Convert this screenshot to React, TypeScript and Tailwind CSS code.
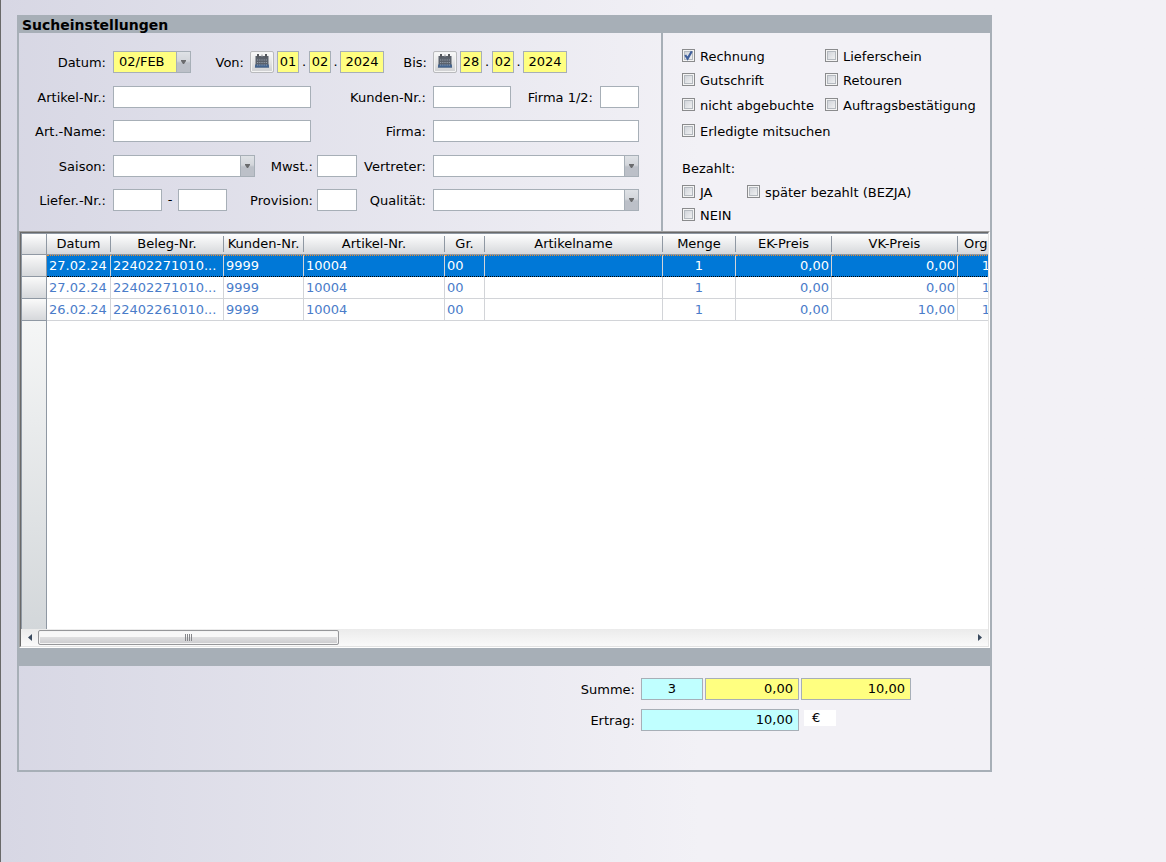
import { useState } from 'react';
import type { ReactNode } from 'react';
import clsx from 'clsx';

type Column = {
    title: string;
    width: string;
    align: string;
};

const columns: Column[] = [
    { title: 'Datum', width: 'w-[64px]', align: 'text-left' },
    { title: 'Beleg-Nr.', width: 'w-[113px]', align: 'text-left' },
    { title: 'Kunden-Nr.', width: 'w-[80px]', align: 'text-left' },
    { title: 'Artikel-Nr.', width: 'w-[141px]', align: 'text-left' },
    { title: 'Gr.', width: 'w-[40px]', align: 'text-left' },
    { title: 'Artikelname', width: 'w-[178px]', align: 'text-left' },
    { title: 'Menge', width: 'w-[73px]', align: 'text-center' },
    { title: 'EK-Preis', width: 'w-[96px]', align: 'text-right' },
    { title: 'VK-Preis', width: 'w-[126px]', align: 'text-right' },
    { title: 'Org', width: 'w-[57px]', align: 'text-center' },
];

const rows = [
    ['27.02.24', '22402271010...', '9999', '10004', '00', '', '1', '0,00', '0,00', '1'],
    ['27.02.24', '22402271010...', '9999', '10004', '00', '', '1', '0,00', '0,00', '1'],
    ['26.02.24', '22402261010...', '9999', '10004', '00', '', '1', '0,00', '10,00', '1'],
];

function Label({ htmlFor, className, children }: { htmlFor: string; className: string; children: ReactNode }) {
    return (
        <label htmlFor={htmlFor} className={clsx('shrink-0 whitespace-nowrap pt-0.5 text-right', className)}>
            {children}
        </label>
    );
}

function Field({ id, className, value = '', label }: { id: string; className: string; value?: string; label?: string }) {
    return (
        <input
            id={id}
            type="text"
            aria-label={label}
            defaultValue={value}
            className={clsx('h-[22px] shrink-0 border border-[#a7afb7] pb-px outline-none', className)}
        />
    );
}

function Dropdown({ id, className, options = [] }: { id: string; className: string; options?: string[] }) {
    return (
        <div className={clsx('flex h-[22px] shrink-0 border border-[#a7afb7]', className)}>
            <select id={id} className="min-w-0 flex-1 appearance-none pb-px pl-[5px] outline-none">
                {options.map((option) => (
                    <option key={option}>{option}</option>
                ))}
            </select>
            <span className="flex w-3.5 items-center justify-center border-l border-[#a7afb7] bg-linear-to-b from-[#dfe2e6] via-[#d3d6db] via-45% to-[#bcc0c8] to-55%">
                <svg width="5" height="4" viewBox="0 0 5 4" aria-hidden="true">
                    <path d="M0 0h5v1L3 4H2L0 1z" fill="#6a6b6d" />
                </svg>
            </span>
        </div>
    );
}

function CalendarButton({ label }: { label: string }) {
    return (
        <button
            type="button"
            aria-label={label}
            className="mr-[3px] flex h-[22px] w-6 shrink-0 items-start justify-center rounded-xs border border-[#b9babd] bg-linear-to-b from-[#fafafa] to-[#cfd0d2] pt-0.5 shadow-[inset_0_0_0_1px_#f4f4f4]"
        >
            <svg width="16" height="15" viewBox="0 0 16 15" aria-hidden="true">
                <path d="M1.5 2h13v8l.5 3.5H1l.5-3.5z" fill="#5a616b" />
                <path d="M1.3 10.5h13.4l.4 3H.9z" fill="#43648f" />
                <path d="M4 0v3.5M12 0v3.5" stroke="#55585d" strokeWidth="2" />
                <path d="M8 .5v2.5" stroke="#8b8e93" strokeWidth="1" />
                <path d="M3 6h10M3 8.5h10M3 11h10" stroke="#98a1ad" strokeWidth="1.2" strokeDasharray="1.2 1" />
            </svg>
        </button>
    );
}

function DateFields({ name, day, month, year }: { name: string; day: string; month: string; year: string }) {
    return (
        <>
            <CalendarButton label={`${name}: Kalender öffnen`} />
            <Field id={name} value={day} className="w-[22px] bg-[#ffff80] text-center" />
            <span className="w-2.5 shrink-0 text-center">.</span>
            <Field id={`${name}-monat`} label={`${name} Monat`} value={month} className="w-[22px] bg-[#ffff80] text-center" />
            <span className="w-[9px] shrink-0 text-center">.</span>
            <Field id={`${name}-jahr`} label={`${name} Jahr`} value={year} className="w-11 bg-[#ffff80] text-center" />
        </>
    );
}

function Check({ checked = false, children }: { checked?: boolean; children: ReactNode }) {
    return (
        <label className="relative flex h-[13px] items-start gap-[5px] whitespace-nowrap">
            <input
                type="checkbox"
                defaultChecked={checked}
                className="peer size-[13px] shrink-0 appearance-none border border-[#8a8b8d] bg-linear-to-br from-[#c9cdd4] to-[#f8f8f8] shadow-[inset_0_0_0_1px_#f4f4f4,inset_0_0_0_2px_#b4b9bf]"
            />
            <svg
                className="pointer-events-none absolute left-0 top-0 hidden peer-checked:block"
                width="13"
                height="13"
                viewBox="0 0 13 13"
                aria-hidden="true"
            >
                <path d="M3.2 6 5.6 9.6 9.8 2.2" fill="none" stroke="#41609c" strokeWidth="2.2" />
            </svg>
            <span className="leading-4">{children}</span>
        </label>
    );
}

function SearchForm() {
    return (
        <form className="grid w-[642px] shrink-0 grid-rows-[35px_34px_35px_34px_22px] items-start pt-[18px]">
            <div className="flex h-[22px] items-center">
                <Label htmlFor="datum" className="w-[94px] pr-[7px]">Datum:</Label>
                <Dropdown id="datum" className="w-[78px] bg-[#ffff80]" options={['02/FEB']} />
                <Label htmlFor="von" className="w-[59px] pr-1.5">Von:</Label>
                <DateFields name="von" day="01" month="02" year="2024" />
                <Label htmlFor="bis" className="w-[49px] pr-1.5">Bis:</Label>
                <DateFields name="bis" day="28" month="02" year="2024" />
            </div>
            <div className="flex h-[22px] items-center">
                <Label htmlFor="artikelnr" className="w-[94px] pr-[7px]">Artikel-Nr.:</Label>
                <Field id="artikelnr" className="w-[198px] bg-white px-1" />
                <Label htmlFor="kundennr" className="w-[122px] pr-[7px]">Kunden-Nr.:</Label>
                <Field id="kundennr" className="w-[78px] bg-white px-1" />
                <Label htmlFor="firma12" className="w-[89px] pr-[7px]">Firma 1/2:</Label>
                <Field id="firma12" className="w-[39px] bg-white px-1" />
            </div>
            <div className="flex h-[22px] items-center">
                <Label htmlFor="artname" className="w-[94px] pr-[7px]">Art.-Name:</Label>
                <Field id="artname" className="w-[198px] bg-white px-1" />
                <Label htmlFor="firma" className="w-[122px] pr-[7px]">Firma:</Label>
                <Field id="firma" className="w-[206px] bg-white px-1" />
            </div>
            <div className="flex h-[22px] items-center">
                <Label htmlFor="saison" className="w-[94px] pr-[7px]">Saison:</Label>
                <Dropdown id="saison" className="w-[142px] bg-white" />
                <Label htmlFor="mwst" className="w-[62px] pr-1">Mwst.:</Label>
                <Field id="mwst" className="w-10 bg-white px-1" />
                <Label htmlFor="vertreter" className="w-[76px] pr-[7px]">Vertreter:</Label>
                <Dropdown id="vertreter" className="w-[206px] bg-white" />
            </div>
            <div className="flex h-[22px] items-center">
                <Label htmlFor="liefernr" className="w-[94px] pr-[7px]">Liefer.-Nr.:</Label>
                <Field id="liefernr" className="w-[49px] bg-white px-1" />
                <span className="w-4 text-center">-</span>
                <Field id="liefernr-bis" label="Liefer.-Nr. bis" className="w-[49px] bg-white px-1" />
                <Label htmlFor="provision" className="w-[90px] pr-1">Provision:</Label>
                <Field id="provision" className="w-10 bg-white px-1" />
                <Label htmlFor="qualitaet" className="w-[76px] pr-[7px]">Qualität:</Label>
                <Dropdown id="qualitaet" className="w-[206px] bg-white" />
            </div>
        </form>
    );
}

function Filters() {
    return (
        <div className="grid flex-1 grid-cols-[143px_1fr] grid-rows-[24px_25px_26px_38px_23px_23px_13px] items-start border-l-2 border-[#a7afb7] pl-[19px] pt-4">
            <Check checked>Rechnung</Check>
            <Check>Lieferschein</Check>
            <Check>Gutschrift</Check>
            <Check>Retouren</Check>
            <Check>nicht abgebuchte</Check>
            <Check>Auftragsbestätigung</Check>
            <div className="col-span-2">
                <Check>Erledigte mitsuchen</Check>
            </div>
            <div className="col-span-2 leading-[13px]">Bezahlt:</div>
            <div className="col-span-2 grid grid-cols-[65px_1fr]">
                <Check>JA</Check>
                <Check>später bezahlt (BEZJA)</Check>
            </div>
            <div className="col-span-2">
                <Check>NEIN</Check>
            </div>
        </div>
    );
}

function ResultTable() {
    const [selected, setSelected] = useState(0);

    return (
        <div className="border border-b-white border-l-[#a0a0a0] border-r-white border-t-[#a0a0a0]">
            <div className="flex h-[415px] flex-col border border-b-[#e3e3e3] border-l-[#696969] border-r-[#e3e3e3] border-t-[#696969] bg-white">
                <div className="flex flex-1 flex-col overflow-hidden">
                    <table className="w-[994px] table-fixed border-separate border-spacing-0">
                        <thead>
                            <tr className="h-[22px]">
                                <th className="w-[26px] border border-[#8f98a3] bg-linear-to-b from-white to-[#d6d8db] p-0" />
                                {columns.map((column) => (
                                    <th
                                        key={column.title}
                                        className={clsx(
                                            'border-y border-[#8f98a3] bg-linear-to-b from-white to-[#d6d8db] p-0 font-normal',
                                            column.width,
                                        )}
                                    >
                                        <div className={clsx('h-4 border-r border-[#8f98a3] leading-4', column.title === 'Org' && 'pl-1.5 text-left')}>
                                            {column.title}
                                        </div>
                                    </th>
                                ))}
                            </tr>
                        </thead>
                        <tbody>
                            {rows.map((row, i) => (
                                <tr
                                    key={i}
                                    onClick={() => setSelected(i)}
                                    className={clsx('h-[22px]', selected === i ? 'bg-[#0078d7] text-white' : 'text-[#4a7cc9]')}
                                >
                                    <td className="border-x border-b border-[#8f98a3] bg-linear-to-b from-[#fafafa] to-[#d6d8db] p-0" />
                                    {row.map((cell, j) => (
                                        <td
                                            key={j}
                                            className={clsx(
                                                'overflow-hidden whitespace-nowrap border-b border-r border-r-[#d2d4d8] px-0.5 py-0 leading-5',
                                                selected === i
                                                    ? 'border-b-black border-t border-t-[#f08c28] [border-bottom-style:dotted] [border-top-style:dotted]'
                                                    : 'border-b-[#d2d4d8]',
                                                columns[j].align,
                                            )}
                                        >
                                            {cell}
                                        </td>
                                    ))}
                                </tr>
                            ))}
                        </tbody>
                    </table>
                    <div className="w-[26px] flex-1 border-x border-[#8f98a3] bg-linear-to-b from-[#f5f6f6] to-[#d3d7da]" />
                </div>
                <div className="flex h-[17px] items-center bg-linear-to-b from-[#ebebeb] to-[#fafafa]">
                    <button type="button" aria-label="Nach links" className="flex h-full w-[17px] items-center justify-center">
                        <svg width="4" height="7" viewBox="0 0 4 7" aria-hidden="true">
                            <path d="M4 0v7L0 3.5z" fill="#3a4a5e" />
                        </svg>
                    </button>
                    <div className="flex h-[15px] w-[301px] items-center justify-center gap-px rounded-xs border border-[#96979a] bg-linear-to-b from-[#f8f8f8] from-45% via-[#dededf] via-50% to-[#cbcbce] shadow-[inset_0_0_0_1px_#f4f4f4]">
                        <span className="h-[7px] w-px bg-[#85868a]" />
                        <span className="h-[7px] w-px bg-[#85868a]" />
                        <span className="h-[7px] w-px bg-[#85868a]" />
                        <span className="h-[7px] w-px bg-[#85868a]" />
                    </div>
                    <button type="button" aria-label="Nach rechts" className="ml-auto flex h-full w-[17px] items-center justify-center">
                        <svg width="4" height="7" viewBox="0 0 4 7" aria-hidden="true">
                            <path d="M0 0v7l4-3.5z" fill="#3a4a5e" />
                        </svg>
                    </button>
                </div>
            </div>
        </div>
    );
}

function Totals() {
    return (
        <div className="flex h-[104px] flex-col gap-[9px] pt-3">
            <div className="flex items-center gap-0.5">
                <Label htmlFor="summe" className="w-[620px] pr-1">Summe:</Label>
                <Field id="summe" value="3" className="w-[62px] bg-[#c0ffff] text-center" />
                <Field id="summe-ek" label="Summe EK-Preis" value="0,00" className="w-[94px] bg-[#ffff80] pr-[5px] text-right" />
                <Field id="summe-vk" label="Summe VK-Preis" value="10,00" className="w-[110px] bg-[#ffff80] pr-[5px] text-right" />
            </div>
            <div className="flex items-center gap-0.5">
                <Label htmlFor="ertrag" className="w-[620px] pr-1">Ertrag:</Label>
                <Field id="ertrag" value="10,00" className="w-[158px] bg-[#c0ffff] pr-[5px] text-right" />
                <span className="ml-[3px] mb-1 h-4 w-8 bg-white pl-2 leading-4">€</span>
            </div>
        </div>
    );
}

export default function App() {
    return (
        <main className="min-h-screen border-l border-[#696969] bg-linear-to-r from-[#d7d7e4] to-[#f2f1f6] to-60% pl-4 pt-[15px] font-['DejaVu_Sans',sans-serif] text-[13px] leading-4 text-black">
            <section className="w-full max-w-[975px] border-2 border-t-0 border-[#a7afb7]">
                <h1 className="h-[18px] bg-[#a7afb7] pl-[3px] text-[14px] font-bold leading-5">Sucheinstellungen</h1>
                <div className="flex h-[198px]">
                    <SearchForm />
                    <Filters />
                </div>
                <ResultTable />
                <div className="h-[18px] bg-[#a7afb7]" />
                <Totals />
            </section>
        </main>
    );
}
